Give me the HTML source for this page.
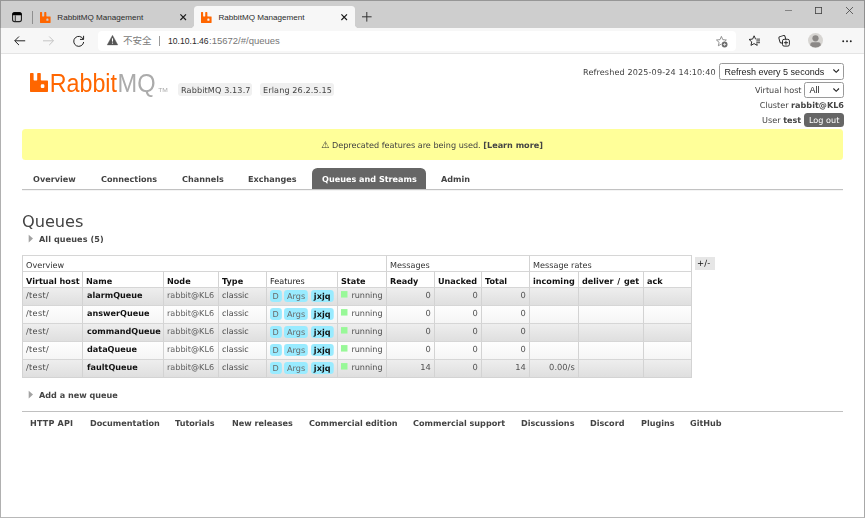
<!DOCTYPE html>
<html lang="en">
<head>
<meta charset="utf-8">
<title>RabbitMQ Management</title>
<style>
*{box-sizing:border-box}
html,body{margin:0;padding:0}
body{width:865px;height:518px;overflow:hidden;background:#fff;position:relative;
 font-family:"DejaVu Sans","Liberation Sans",sans-serif;font-size:7.5px;line-height:10px;color:#424242;filter:blur(.4px)}
.abs,.t{position:absolute;white-space:nowrap}
.t{transform:scale(1.08);transform-origin:0 0;line-height:10.2px}
.t.r{transform-origin:100% 0}
.d{letter-spacing:.11px}
b,.b{font-weight:bold;letter-spacing:0}
a{color:#444;font-weight:bold;text-decoration:none}
svg{position:absolute;overflow:visible}
.ui{font-family:"Liberation Sans","Noto Sans CJK SC",sans-serif;letter-spacing:0;transform:scaleX(1)}

/* ---------- browser chrome ---------- */
#win{position:absolute;left:0;top:0;width:865px;height:518px;border:1px solid #b0b0b0;border-top-color:#969696;border-right-color:#a8a8a8;border-bottom-color:#b8b8b8;pointer-events:none;z-index:50}
#tabbar{position:absolute;left:0;top:0;width:865px;height:28px;background:#cecece}
#toolbar{position:absolute;left:0;top:28px;width:865px;height:26px;background:#f7f7f7;border-bottom:1px solid #e4e4e4}
#atab{position:absolute;left:194px;top:6px;width:161px;height:22px;background:#f7f7f7;border-radius:3.5px 3.5px 0 0}
#atab:before,#atab:after{content:"";position:absolute;bottom:0;width:3px;height:3px;background:radial-gradient(circle at 0 0,rgba(247,247,247,0) 2.6px,#f7f7f7 3.1px)}
#atab:before{left:-3px}
#atab:after{right:-3px;background:radial-gradient(circle at 100% 0,rgba(247,247,247,0) 2.6px,#f7f7f7 3.1px)}
.tabtitle{top:13px;font-size:8.1px;line-height:10px;color:#2b2b2b}
#addr{position:absolute;left:98px;top:31px;width:638px;height:20px;background:#fff;border-radius:4px}

/* ---------- page ---------- */
.badge{position:absolute;background:#f0f0f0;border-radius:3px;height:12.5px}
.sel{position:absolute;will-change:transform;background:#fff;border:1px solid #9a9a9a;border-radius:2.5px;font-family:"Liberation Sans",sans-serif;font-size:9px;line-height:14px;color:#1a1a1a;white-space:nowrap}
#logout{position:absolute;left:804px;top:113px;width:39.6px;height:14px;background:#666;border-radius:3.5px}
#banner{position:absolute;left:22px;top:129px;width:821px;height:30.6px;background:#ffff99;border-radius:3.5px}
#nav{position:absolute;left:22px;top:189px;width:821px;height:2px;background:linear-gradient(#c2c2c2 50%,#f4f4f4 50%)}
.nv{top:173.8px;font-weight:bold;color:#444}
#sel{position:absolute;left:311.5px;top:167.6px;width:114.5px;height:21.6px;background:#666;border-radius:5.4px 5.4px 0 0}
h1{position:absolute;margin:0;left:22px;top:211px;font-size:16.2px;line-height:22px;font-weight:normal;color:#444;letter-spacing:-.05px;transform:scale(1,1.03);transform-origin:0 15.7px;white-space:nowrap}
#foot{position:absolute;left:22px;top:411px;width:821px;height:1px;background:#c0c0c0}
.ft{top:418.2px;font-weight:bold;color:#444}

/* ---------- table ---------- */
#tbl{position:absolute;left:22px;top:255px;border-collapse:separate;border-spacing:0;table-layout:fixed;width:670px;font-size:7.5px;line-height:10px;border-right:1px solid #d3d3d3;border-bottom:1px solid #d3d3d3}
#tbl td,#tbl th{border-left:1px solid #d3d3d3;border-top:1px solid #d6d6d6;padding:0 0 0 2.6px;text-align:left;vertical-align:top;white-space:nowrap;overflow:visible;font-weight:normal;color:#484848}
#tbl .s{display:inline-block;transform:scale(1.08);transform-origin:0 0;vertical-align:top}
#tbl .num .s{transform-origin:100% 0}
#tbl tr.g th{height:16px;padding-top:4.3px;color:#333}
#tbl tr>:first-child{padding-left:3px}
#tbl tr.h th{height:16px;padding-top:4.3px;color:#111;font-weight:bold}
#tbl tr.h th.n{font-weight:normal;color:#222}
#tbl tr.r td{height:18px;padding-top:2.1px;color:#484848}
#tbl tr.a td{background:linear-gradient(#eee,#dfdfdf)}
#tbl tr.w td{background:linear-gradient(#fefefe,#f5f5f5)}
#tbl tr.r td.nm{font-weight:bold;color:#111;padding-left:3.5px}
#tbl tr.r td.vh{letter-spacing:.32px}
#tbl tr.h th:nth-child(n+2){padding-left:3.1px}
#tbl tr.h th:nth-child(7){padding-left:2.7px}
#tbl tr.r td.nd{color:#606060}
#tbl tr.r td.num{text-align:right;padding-right:3.4px;color:#505050;font-size:7.7px}
#tbl tr.r td.st{color:#505050}
.f{display:inline-block;background:#99ebff;border-radius:2.96px;height:11.48px;line-height:11.48px;padding:0 2.41px;margin:0 2.78px 0 0;vertical-align:top;color:#686868;position:relative;top:-.5px}
.f.p{font-weight:bold;color:#111;padding:0 2.87px;letter-spacing:.05px}
.g1{display:inline-block;width:6.48px;height:6.11px;background:#98f898;margin:1.39px 3.15px 0 0;vertical-align:top}
#pm{position:absolute;left:695px;top:257px;width:19.6px;height:13px;background:#e6e6e6}
</style>
</head>
<body>

<!-- ======= Browser chrome ======= -->
<div id="tabbar"></div>
<div id="toolbar"></div>
<div id="atab"></div>

<!-- tab actions -->
<svg style="left:11.6px;top:11.7px" width="10" height="10.2" viewBox="0 0 10 10.2"><rect x=".55" y=".55" width="8.9" height="9.1" rx="2.1" fill="none" stroke="#222" stroke-width="1.1"/><path d="M.3 3.1Q.3.3 2.6.3H7.4Q9.7.3 9.7 3.1V3.3H.3Z" fill="#000"/><path d="M3.3 3.3V9.6" stroke="#333" stroke-width="1"/></svg>
<div class="abs" style="left:32px;top:10.5px;width:1px;height:13.5px;background:#8f8f8f"></div>

<!-- tab 1 (inactive) -->
<svg style="left:40px;top:11.6px" width="10.6" height="11" viewBox="0 0 24 24" preserveAspectRatio="none"><path fill="#f60" d="M23.035 9.601h-7.677a.956.956 0 01-.962-.962V.962a.956.956 0 00-.962-.956H10.56a.956.956 0 00-.962.956V8.64a.956.956 0 01-.962.962H5.762a.956.956 0 01-.961-.962V.962A.956.956 0 003.839 0H.959a.956.956 0 00-.956.962v22.076A.956.956 0 00.965 24h22.07a.956.956 0 00.962-.962V10.58a.956.956 0 00-.962-.98zm-3.86 8.152a1.437 1.437 0 01-1.437 1.443h-1.924a1.437 1.437 0 01-1.436-1.443v-1.917a1.437 1.437 0 011.436-1.443h1.924a1.437 1.437 0 011.437 1.443z"/></svg>
<span class="t ui tabtitle" style="left:57.3px">RabbitMQ Management</span>
<svg style="left:180.2px;top:14.2px" width="6.4" height="6.4" viewBox="0 0 6.4 6.4"><path d="M.4.4 6 6M6 .4.4 6" stroke="#1a1a1a" stroke-width="1.15" fill="none"/></svg>

<!-- tab 2 (active) -->
<svg style="left:201.3px;top:11.6px" width="10.6" height="11" viewBox="0 0 24 24" preserveAspectRatio="none"><path fill="#f60" d="M23.035 9.601h-7.677a.956.956 0 01-.962-.962V.962a.956.956 0 00-.962-.956H10.56a.956.956 0 00-.962.956V8.64a.956.956 0 01-.962.962H5.762a.956.956 0 01-.961-.962V.962A.956.956 0 003.839 0H.959a.956.956 0 00-.956.962v22.076A.956.956 0 00.965 24h22.07a.956.956 0 00.962-.962V10.58a.956.956 0 00-.962-.98zm-3.86 8.152a1.437 1.437 0 01-1.437 1.443h-1.924a1.437 1.437 0 01-1.436-1.443v-1.917a1.437 1.437 0 011.436-1.443h1.924a1.437 1.437 0 011.437 1.443z"/></svg>
<span class="t ui tabtitle" style="left:218.5px">RabbitMQ Management</span>
<svg style="left:340.8px;top:14.2px" width="6.4" height="6.4" viewBox="0 0 6.4 6.4"><path d="M.4.4 6 6M6 .4.4 6" stroke="#1a1a1a" stroke-width="1.15" fill="none"/></svg>

<!-- new tab -->
<svg style="left:362.2px;top:11.8px" width="9.6" height="9.6" viewBox="0 0 9.6 9.6"><path d="M0 4.8H9.6M4.8 0V9.6" stroke="#333" stroke-width="1" fill="none"/></svg>

<!-- window controls -->
<svg style="left:784.5px;top:9.7px" width="7" height="1" viewBox="0 0 7 1"><path d="M0 .5H7" stroke="#848484" stroke-width="1"/></svg>
<svg style="left:815px;top:7.2px" width="7" height="7" viewBox="0 0 7 7"><rect x=".4" y=".4" width="6.2" height="6.2" fill="none" stroke="#444" stroke-width=".8"/></svg>
<svg style="left:846px;top:7px" width="7" height="7" viewBox="0 0 7 7"><path d="M0 0 7 7M7 0 0 7" stroke="#444" stroke-width=".8" fill="none"/></svg>

<!-- back / forward / reload -->
<svg style="left:13.8px;top:35.5px" width="11.2" height="9.6" viewBox="0 0 11.2 9.6"><path d="M11.2 4.8H.9M5 .5.7 4.8 5 9.1" stroke="#222" stroke-width="1" fill="none"/></svg>
<svg style="left:43.3px;top:35.5px" width="11.2" height="9.6" viewBox="0 0 11.2 9.6"><path d="M0 4.8H10.3M6.2.5 10.5 4.8 6.2 9.1" stroke="#c4c4c4" stroke-width="1" fill="none"/></svg>
<svg style="left:73px;top:34.6px" width="11.6" height="11.4" viewBox="0 0 11.6 11.4"><path d="M10.3 4.3A5 5 0 1 0 10.7 7" stroke="#222" stroke-width="1" fill="none"/><path d="M10.6.8V4.4H7" stroke="#222" stroke-width="1" fill="none"/></svg>

<!-- address bar -->
<div id="addr"></div>
<svg style="left:107px;top:35.3px" width="11" height="10.2" viewBox="0 0 11 10.2"><path d="M5.5.3 10.8 9.9H.2Z" fill="#555" stroke="#555" stroke-width=".4" stroke-linejoin="round"/><path d="M5.5 3.3V6.6" stroke="#fff" stroke-width="1.1"/><circle cx="5.5" cy="8.1" r=".65" fill="#fff"/></svg>
<span class="t ui" style="left:122.9px;top:34.5px;font-size:9.5px;line-height:12px;color:#7a7a7a">不安全</span>
<div class="abs" style="left:158.6px;top:36px;width:1px;height:10px;background:#9a9a9a"></div>
<span class="t ui" style="left:168.3px;top:34.8px;font-size:9.5px;line-height:12px;color:#767676"><span style="color:#2a2a2a;display:inline-block;transform:scaleX(.905);transform-origin:0 0;margin-right:-4.2px">10.10.1.46</span>:15672/#/queues</span>

<!-- favourite star with plus -->
<svg style="left:716.4px;top:35.6px" width="11.8" height="11.6" viewBox="0 0 11.8 11.6"><path d="M5.40 0.40 6.81 3.66 10.35 3.99 7.68 6.34 8.46 9.81 5.40 8.00 2.34 9.81 3.12 6.34 0.45 3.99 3.99 3.66Z" fill="none" stroke="#7a7a7a" stroke-width=".8" stroke-linejoin="round"/><circle cx="8.6" cy="8.5" r="3.3" fill="#fff"/><circle cx="8.6" cy="8.5" r="2.9" fill="#6e6e6e"/><path d="M7.1 8.5H10.1M8.6 7V10" stroke="#e8e8e8" stroke-width=".8"/></svg>
<!-- favourites list -->
<svg style="left:748.8px;top:35.4px" width="11.8" height="11.6" viewBox="0 0 11.8 11.6"><path d="M5.10 0.80 6.57 4.08 10.14 4.46 7.48 6.87 8.22 10.39 5.10 8.60 1.98 10.39 2.72 6.87 0.06 4.46 3.63 4.08Z" fill="none" stroke="#222" stroke-width=".95" stroke-linejoin="round"/><rect x="6.9" y="2.9" width="5" height="5.6" fill="#f7f7f7"/><path d="M7.3 4.2H11M7.3 5.9H11M7.3 7.6H11" stroke="#666" stroke-width="1.15"/></svg>
<!-- collections -->
<svg style="left:778.2px;top:35.2px" width="12" height="11.6" viewBox="0 0 12 11.6"><rect x="1.3" y="1" width="6.4" height="6.6" rx="1.5" fill="none" stroke="#222" stroke-width=".95" transform="rotate(-16 4.5 4.3)"/><rect x="4.5" y="4.3" width="6.9" height="6.8" rx="1.6" fill="#f7f7f7" stroke="#222" stroke-width=".95"/><path d="M5.9 7.7H10M7.95 5.7V9.7" stroke="#222" stroke-width=".95"/></svg>
<!-- profile -->
<svg style="left:807.6px;top:33.3px" width="15" height="15" viewBox="0 0 15 15"><defs><clipPath id="av"><circle cx="7.5" cy="7.5" r="7.5"/></clipPath></defs><circle cx="7.5" cy="7.5" r="7.5" fill="#d7d5d2"/><g clip-path="url(#av)" fill="#8b8886"><circle cx="7.5" cy="5.3" r="3.1"/><path d="M2.2 12.4Q2.2 9.3 4.6 9.3H10.4Q12.8 9.3 12.8 12.4Q10.6 14.4 7.5 14.4Q4.4 14.4 2.2 12.4Z"/></g></svg>
<!-- menu dots -->
<svg style="left:841.6px;top:39.9px" width="10" height="2.4" viewBox="0 0 10 2.4"><circle cx="1.2" cy="1.2" r=".95" fill="#222"/><circle cx="5" cy="1.2" r=".95" fill="#222"/><circle cx="8.8" cy="1.2" r=".95" fill="#222"/></svg>


<!-- ======= Page ======= -->
<!-- logo -->
<svg style="left:30px;top:73.1px" width="18" height="18.9" viewBox="0 0 24 24" preserveAspectRatio="none"><path fill="#f60" d="M23.035 9.601h-7.677a.956.956 0 01-.962-.962V.962a.956.956 0 00-.962-.956H10.56a.956.956 0 00-.962.956V8.64a.956.956 0 01-.962.962H5.762a.956.956 0 01-.961-.962V.962A.956.956 0 003.839 0H.959a.956.956 0 00-.956.962v22.076A.956.956 0 00.965 24h22.07a.956.956 0 00.962-.962V10.58a.956.956 0 00-.962-.98zm-3.86 8.152a1.437 1.437 0 01-1.437 1.443h-1.924a1.437 1.437 0 01-1.436-1.443v-1.917a1.437 1.437 0 011.436-1.443h1.924a1.437 1.437 0 011.437 1.443z"/></svg>
<svg style="left:0;top:60px" width="180" height="40" viewBox="0 0 180 40">
 <text x="49.7" y="32.1" font-family="Liberation Sans, sans-serif" font-size="26" fill="#f60" textLength="67.3" lengthAdjust="spacingAndGlyphs">Rabbit</text>
 <text x="117.6" y="32.1" font-family="Liberation Sans, sans-serif" font-size="26" fill="#ababab" textLength="38" lengthAdjust="spacingAndGlyphs">MQ</text>
 <text x="158.3" y="32.1" font-family="Liberation Sans, sans-serif" font-size="5.6" fill="#a9a9a9" textLength="9.6" lengthAdjust="spacingAndGlyphs">TM</text>
</svg>

<!-- versions -->
<div class="badge" style="left:178.3px;top:83.4px;width:73.7px"></div>
<span class="t d" style="left:181.3px;top:85px">RabbitMQ 3.13.7</span>
<div class="badge" style="left:260.3px;top:83.4px;width:73.7px"></div>
<span class="t d" style="left:263.4px;top:85px">Erlang 26.2.5.15</span>

<!-- right header -->
<span class="t d" style="left:583.2px;top:66.9px">Refreshed 2025-09-24 14:10:40</span>
<div class="sel" style="left:719px;top:63px;width:125px;height:17px;padding-left:4.6px;line-height:16.4px">Refresh every 5 seconds</div>
<svg style="left:832.6px;top:69.2px" width="6.4" height="4" viewBox="0 0 6.4 4"><path d="M.4.5 3.2 3.3 6 .5" fill="none" stroke="#222" stroke-width="1.1"/></svg>
<span class="t" style="left:754.5px;top:85.4px">Virtual host</span>
<div class="sel" style="left:804px;top:82px;width:40px;height:16px;padding-left:4.6px;line-height:15.8px">All</div>
<svg style="left:832.6px;top:87.8px" width="6.4" height="4" viewBox="0 0 6.4 4"><path d="M.4.5 3.2 3.3 6 .5" fill="none" stroke="#222" stroke-width="1.1"/></svg>
<span class="t r" style="right:21.2px;top:100.1px">Cluster <b style="color:#444">rabbit@KL6</b></span>
<span class="t r" style="right:64px;top:115.1px">User <b style="color:#444">test</b></span>
<div id="logout"></div>
<span class="t" style="left:808.5px;top:115.1px;color:#fff">Log out</span>

<!-- banner -->
<div id="banner"></div>
<span class="t" style="left:321.4px;top:138.5px"><span style="font-size:8.6px;color:#333;line-height:10px;position:relative;top:.3px">⚠</span> Deprecated features are being used. <a>[Learn more]</a></span>

<!-- menu -->
<div id="sel"></div>
<div id="nav"></div>
<a class="t nv" style="left:32.6px">Overview</a>
<a class="t nv" style="left:100.8px">Connections</a>
<a class="t nv" style="left:181.5px">Channels</a>
<a class="t nv" style="left:248.4px">Exchanges</a>
<a class="t nv" style="left:322px;color:#fff">Queues and Streams</a>
<a class="t nv" style="left:441.3px">Admin</a>

<!-- main -->
<h1>Queues</h1>
<svg style="left:29.2px;top:235px" width="3.8" height="7.2" viewBox="0 0 3.8 7.2"><path d="M-.3 -.2 4 3.6 -.3 7.4Z" fill="#a2a2a2"/></svg>
<span class="t b" style="left:39.1px;top:234.4px;color:#444;letter-spacing:.07px">All queues (5)</span>

<table id="tbl">
<colgroup><col style="width:60px"><col style="width:81px"><col style="width:55px"><col style="width:48px"><col style="width:71px"><col style="width:49px"><col style="width:48px"><col style="width:47px"><col style="width:48px"><col style="width:49px"><col style="width:65px"><col style="width:48px"></colgroup>
<tr class="g"><th colspan="6"><span class="s">Overview</span></th><th colspan="3"><span class="s">Messages</span></th><th colspan="3"><span class="s">Message rates</span></th></tr>
<tr class="h"><th><span class="s">Virtual host</span></th><th><span class="s">Name</span></th><th><span class="s">Node</span></th><th><span class="s">Type</span></th><th class="n"><span class="s">Features</span></th><th><span class="s">State</span></th><th><span class="s">Ready</span></th><th><span class="s">Unacked</span></th><th><span class="s">Total</span></th><th><span class="s">incoming</span></th><th><span class="s" style="word-spacing:.8px">deliver / get</span></th><th><span class="s">ack</span></th></tr>
<tr class="r a"><td class="vh"><span class="s">/test/</span></td><td class="nm"><span class="s">alarmQueue</span></td><td class="nd"><span class="s">rabbit@KL6</span></td><td><span class="s">classic</span></td><td><span class="s"><span class="f">D</span><span class="f">Args</span><span class="f p">jxjq</span></span></td><td class="st"><span class="s"><span class="g1"></span>running</span></td><td class="num"><span class="s">0</span></td><td class="num"><span class="s">0</span></td><td class="num"><span class="s">0</span></td><td class="num"></td><td class="num"></td><td class="num"></td></tr>
<tr class="r w"><td class="vh"><span class="s">/test/</span></td><td class="nm"><span class="s">answerQueue</span></td><td class="nd"><span class="s">rabbit@KL6</span></td><td><span class="s">classic</span></td><td><span class="s"><span class="f">D</span><span class="f">Args</span><span class="f p">jxjq</span></span></td><td class="st"><span class="s"><span class="g1"></span>running</span></td><td class="num"><span class="s">0</span></td><td class="num"><span class="s">0</span></td><td class="num"><span class="s">0</span></td><td class="num"></td><td class="num"></td><td class="num"></td></tr>
<tr class="r a"><td class="vh"><span class="s">/test/</span></td><td class="nm"><span class="s">commandQueue</span></td><td class="nd"><span class="s">rabbit@KL6</span></td><td><span class="s">classic</span></td><td><span class="s"><span class="f">D</span><span class="f">Args</span><span class="f p">jxjq</span></span></td><td class="st"><span class="s"><span class="g1"></span>running</span></td><td class="num"><span class="s">0</span></td><td class="num"><span class="s">0</span></td><td class="num"><span class="s">0</span></td><td class="num"></td><td class="num"></td><td class="num"></td></tr>
<tr class="r w"><td class="vh"><span class="s">/test/</span></td><td class="nm"><span class="s">dataQueue</span></td><td class="nd"><span class="s">rabbit@KL6</span></td><td><span class="s">classic</span></td><td><span class="s"><span class="f">D</span><span class="f">Args</span><span class="f p">jxjq</span></span></td><td class="st"><span class="s"><span class="g1"></span>running</span></td><td class="num"><span class="s">0</span></td><td class="num"><span class="s">0</span></td><td class="num"><span class="s">0</span></td><td class="num"></td><td class="num"></td><td class="num"></td></tr>
<tr class="r a"><td class="vh"><span class="s">/test/</span></td><td class="nm"><span class="s">faultQueue</span></td><td class="nd"><span class="s">rabbit@KL6</span></td><td><span class="s">classic</span></td><td><span class="s"><span class="f">D</span><span class="f">Args</span><span class="f p">jxjq</span></span></td><td class="st"><span class="s"><span class="g1"></span>running</span></td><td class="num"><span class="s">14</span></td><td class="num"><span class="s">0</span></td><td class="num"><span class="s">14</span></td><td class="num"><span class="s">0.00/s</span></td><td class="num"></td><td class="num"></td></tr>
</table>
<div id="pm"></div>
<span class="t" style="left:697.4px;top:258.2px;color:#111;font-size:7.8px;letter-spacing:.2px">+/-</span>

<svg style="left:29.2px;top:390.6px" width="3.8" height="7.2" viewBox="0 0 3.8 7.2"><path d="M-.3 -.2 4 3.6 -.3 7.4Z" fill="#a2a2a2"/></svg>
<span class="t b" style="left:39.1px;top:390px;color:#444">Add a new queue</span>

<!-- footer -->
<div id="foot"></div>
<a class="t ft" style="left:30.4px;letter-spacing:0.14px">HTTP API</a>
<a class="t ft" style="left:89.7px">Documentation</a>
<a class="t ft" style="left:175.3px">Tutorials</a>
<a class="t ft" style="left:231.7px">New releases</a>
<a class="t ft" style="left:308.8px">Commercial edition</a>
<a class="t ft" style="left:412.8px">Commercial support</a>
<a class="t ft" style="left:520.6px">Discussions</a>
<a class="t ft" style="left:590.2px">Discord</a>
<a class="t ft" style="left:640.6px">Plugins</a>
<a class="t ft" style="left:690px">GitHub</a>

<div id="win"></div>
<div class="abs" style="left:0;top:0;width:1px;height:28px;background:#969696;z-index:51"></div>
<div class="abs" style="left:864px;top:0;width:1px;height:28px;background:#8e8e8e;z-index:51"></div>

</body>
</html>
